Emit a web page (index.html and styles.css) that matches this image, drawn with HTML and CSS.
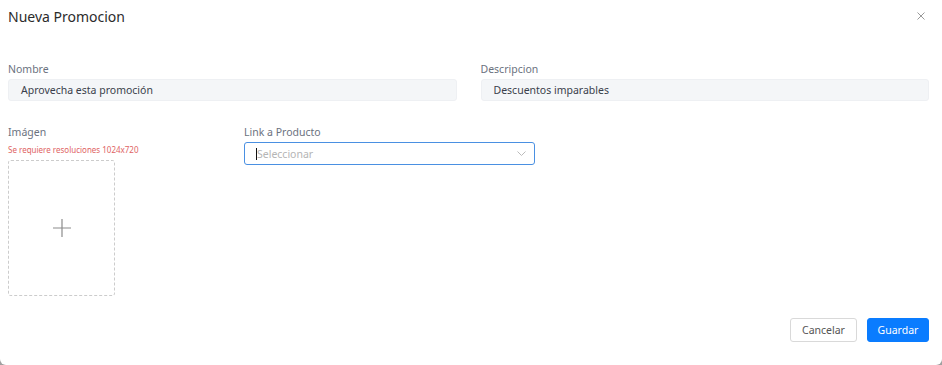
FILE: index.html
```html
<!DOCTYPE html>
<html lang="es">
<head>
    <meta charset="UTF-8">
    <meta name="viewport" content="width=device-width, initial-scale=1.0">
    <title>Nueva Promocion</title>
    <link rel="stylesheet" href="styles.css">
</head>
<body>
    <div class="modal">
        <div class="modal-header">
            <h3 class="modal-title">Nueva Promocion</h3>
            <span class="close">
                <svg width="8" height="8" viewBox="0 0 8 8"><path d="M0.5 0.5L7.5 7.5M7.5 0.5L0.5 7.5" stroke="#999" stroke-width="1"/></svg>
            </span>
        </div>

        <div class="modal-body">
            <div class="row">
                <div class="field">
                    <label>Nombre</label>
                    <div class="input">Aprovecha esta promoción</div>
                </div>
                <div class="field">
                    <label>Descripcion</label>
                    <div class="input">Descuentos imparables</div>
                </div>
            </div>

            <div class="row second">
                <div class="field image-field">
                    <label>Imágen</label>
                    <p class="hint">Se requiere resoluciones 1024x720</p>
                    <div class="upload">
                        <svg width="18" height="18" viewBox="0 0 18 18"><path d="M9 0V18M0 9H18" stroke="#8c8c8c" stroke-width="1.2"/></svg>
                    </div>
                </div>
                <div class="field select-field">
                    <label>Link a Producto</label>
                    <div class="select">
                        <span class="cursor"></span>
                        <span class="placeholder">Seleccionar</span>
                        <svg class="chevron" width="9" height="5" viewBox="0 0 9 5"><path d="M0.5 0.5L4.5 4.5L8.5 0.5" fill="none" stroke="#bbb" stroke-width="1"/></svg>
                    </div>
                </div>
            </div>
        </div>

        <div class="modal-footer">
            <button class="btn btn-cancel">Cancelar</button>
            <button class="btn btn-save">Guardar</button>
        </div>
    </div>
</body>
</html>
```

FILE: styles.css
```css
body {
    margin: 0;
    background-color: #a0a0a0;
    font-family: 'Noto Sans', sans-serif;
    color: #333;
}
.modal {
    background-color: #fff;
    width: 942px;
    height: 365px;
    box-sizing: border-box;
    border-radius: 0 0 6px 6px;
    display: flex;
    flex-direction: column;
}
.modal-header {
    display: flex;
    justify-content: space-between;
    align-items: center;
    padding: 2px 17px 0 8px;
    height: 28px;
}
.modal-title {
    margin: 0;
    font-size: 14px;
    font-weight: 400;
    color: #2b2b2b;
}
.close {
    display: flex;
    cursor: pointer;
}
.modal-body {
    padding: 32px 13px 0 8px;
}
.row {
    display: flex;
    gap: 24px;
}
.row.second {
    margin-top: 24px;
}
.field {
    flex: 1;
    display: flex;
    flex-direction: column;
}
label {
    font-size: 10.5px;
    color: #6b7280;
    margin-bottom: 3px;
    line-height: 14px;
}
.input {
    background-color: #f4f6f8;
    border: 1px solid #eef0f3;
    border-radius: 3px;
    height: 20px;
    line-height: 20px;
    padding: 0 12px;
    font-size: 10.5px;
    color: #3a3f4b;
}
.image-field {
    flex: 0 0 212px;
}
.hint {
    margin: 3px 0 5px;
    font-size: 8px;
    line-height: 10px;
    color: #e06464;
}
.upload {
    width: 105px;
    height: 134px;
    border: 1px dashed #ccc;
    border-radius: 3px;
    display: flex;
    align-items: center;
    justify-content: center;
}
.select-field {
    flex: 0 0 291px;
}
.select {
    height: 21px;
    border: 1px solid #4a90e2;
    border-radius: 3px;
    display: flex;
    align-items: center;
    padding: 0 8px 0 11px;
    font-size: 10.5px;
}
.cursor {
    width: 1px;
    height: 12px;
    background-color: #111;
}
.placeholder {
    color: #b5b5b5;
    flex: 1;
}
.modal-footer {
    margin-top: auto;
    display: flex;
    justify-content: flex-end;
    gap: 10px;
    padding: 0 13px 23px 0;
}
.btn {
    font-family: 'Noto Sans', sans-serif;
    font-size: 10.5px;
    height: 24px;
    border-radius: 3px;
    cursor: pointer;
}
.btn-cancel {
    width: 67px;
    background-color: #fff;
    border: 1px solid #d9d9d9;
    color: #555;
}
.btn-save {
    width: 62px;
    background-color: #0a7cff;
    border: 1px solid #0a7cff;
    color: #fff;
}
```
